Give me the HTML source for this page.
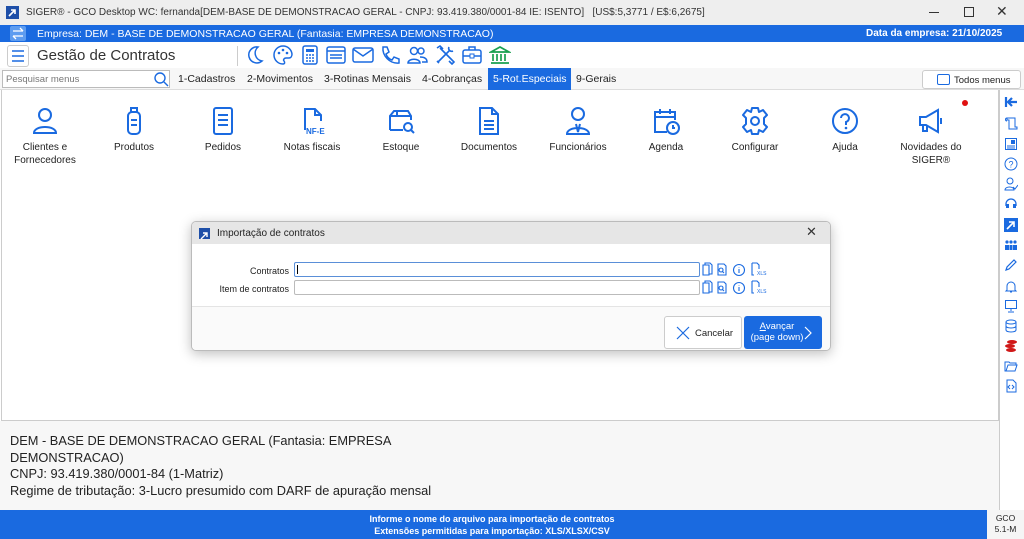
<!DOCTYPE html><html><head><meta charset="utf-8"><style>
*{box-sizing:border-box;margin:0;padding:0}
body{width:1024px;height:539px;overflow:hidden;font-family:"Liberation Sans","DejaVu Sans",sans-serif;background:#fff;position:relative;color:#222}
.a{position:absolute}
.ic{position:absolute;top:106px;width:90px;text-align:center;font-size:10px;color:#222;line-height:13px}
.ic svg{display:block;margin:0 auto 5px;width:30px;height:30px}
.mi{position:absolute;top:73px;font-size:10.5px}
.tb svg{position:absolute;top:44px}
.sb svg{position:absolute;left:1004px;width:14px;height:14px}
</style></head><body>
<div class="a" style="left:0;top:0;width:1024px;height:25px;background:#eeeeee"></div>
<div class="a" style="left:6px;top:6px;width:13px;height:13px;background:#1e4fa8"><svg width="13" height="13"><path d="M3 10L9 4M5 4h4v4" stroke="#fff" stroke-width="1.6" fill="none"/></svg></div>
<div class="a" style="left:26px;top:7px;font-size:10px;color:#333">SIGER® - GCO Desktop WC: fernanda[DEM-BASE DE DEMONSTRACAO GERAL - CNPJ: 93.419.380/0001-84 IE: ISENTO]&nbsp;&nbsp;&nbsp;[US$:5,3771 / E$:6,2675]</div>
<div class="a" style="left:929px;top:12px;width:10px;height:1px;background:#333"></div>
<div class="a" style="left:964px;top:7px;width:10px;height:10px;border:1px solid #333"></div>
<div class="a" style="left:996px;top:3px;font-size:14px;color:#333">✕</div>
<div class="a" style="left:0;top:25px;width:1024px;height:17px;background:#1a6ae0"></div>
<div class="a" style="left:10px;top:26px;width:16px;height:15px;background:#5d9cf0;border-radius:2px"><svg width="16" height="15"><path d="M3 5h10M10 2l3 3M13 10H3M6 13l-3-3" stroke="#fff" stroke-width="1.3" fill="none"/></svg></div>
<div class="a" style="left:37px;top:28px;font-size:10.5px;color:#fff">Empresa: DEM - BASE DE DEMONSTRACAO GERAL (Fantasia: EMPRESA DEMONSTRACAO)</div>
<div class="a" style="left:866px;top:28px;font-size:10px;color:#fff;font-weight:bold">Data da empresa: 21/10/2025</div>
<div class="a" style="left:7px;top:45px;width:22px;height:22px;border:1px solid #ccc;border-radius:3px"><svg width="20" height="20"><path d="M4 5h12M4 10h12M4 15h12" stroke="#1a6ae0" stroke-width="1.6"/></svg></div>
<div class="a" style="left:37px;top:47px;font-size:15px;color:#333">Gestão de Contratos</div>
<div class="a" style="left:237px;top:46px;width:1px;height:20px;background:#ccc"></div>
<div class="tb"><svg style="left:245px" width="20" height="22"><path d="M13 3a8 8 0 1 0 4 14a8 8 0 0 1-4-14z" stroke="#1a6ae0" stroke-width="1.5" fill="none"/></svg>
<svg style="left:272px" width="22" height="22"><path d="M11 2a9 9 0 1 0 0 18c2 0 2-2 1-3s0-3 2-3h3c2 0 3-2 3-4A9 9 0 0 0 11 2z" stroke="#1a6ae0" stroke-width="1.5" fill="none"/><circle cx="7" cy="9" r="1.3" fill="#1a6ae0"/><circle cx="11" cy="6" r="1.3" fill="#1a6ae0"/><circle cx="15" cy="9" r="1.3" fill="#1a6ae0"/></svg>
<svg style="left:300px" width="20" height="22"><rect x="3" y="2" width="14" height="18" rx="2" stroke="#1a6ae0" stroke-width="1.5" fill="none"/><rect x="6" y="5" width="8" height="3" fill="#1a6ae0"/><path d="M6 11h2M9 11h2M12 11h2M6 14h2M9 14h2M12 14h2M6 17h2M9 17h2M12 17h2" stroke="#1a6ae0" stroke-width="1.5"/></svg>
<svg style="left:325px" width="22" height="22"><rect x="2" y="3" width="18" height="16" rx="2" stroke="#1a6ae0" stroke-width="1.5" fill="none"/><path d="M2 7h18M5 11h12M5 14h12" stroke="#1a6ae0" stroke-width="1.5"/></svg>
<svg style="left:351px" width="24" height="22"><rect x="2" y="4" width="20" height="14" rx="2" stroke="#1a6ae0" stroke-width="1.5" fill="none"/><path d="M2 5l10 7l10-7" stroke="#1a6ae0" stroke-width="1.5" fill="none"/></svg>
<svg style="left:379px" width="22" height="22"><path d="M4 3l4 0l2 5l-3 2c1 3 3 5 6 6l2-3l5 2v4c-9 1-17-7-16-16z" stroke="#1a6ae0" stroke-width="1.5" fill="none"/></svg>
<svg style="left:406px" width="22" height="22"><circle cx="8" cy="7" r="3.5" stroke="#1a6ae0" stroke-width="1.5" fill="none"/><circle cx="15" cy="7" r="3" stroke="#1a6ae0" stroke-width="1.5" fill="none"/><path d="M2 19c0-5 12-5 12 0zM14 13c4 0 7 1 7 5h-5" stroke="#1a6ae0" stroke-width="1.5" fill="none"/></svg>
<svg style="left:434px" width="22" height="22"><path d="M4 18L16 6M6 4l12 12M3 4l3-2l3 3M17 15l3 3l-2 2l-3-3M15 3a3 3 0 0 0 4 4M3 17l2 2" stroke="#1a6ae0" stroke-width="1.6" fill="none"/></svg>
<svg style="left:461px" width="22" height="22"><rect x="2" y="6" width="18" height="13" rx="2" stroke="#1a6ae0" stroke-width="1.5" fill="none"/><path d="M8 6V3h6v3M2 12h18" stroke="#1a6ae0" stroke-width="1.5" fill="none"/><rect x="9" y="10" width="4" height="4" fill="#fff" stroke="#1a6ae0"/></svg>
<svg style="left:489px" width="22" height="22"><path d="M2 8l9-5l9 5zM4 10v7M8 10v7M12 10v7M16 10v7M2 19h18" stroke="#1aa050" stroke-width="1.7" fill="none"/></svg></div>
<div class="a" style="left:0;top:68px;width:1024px;height:22px;background:#f7f7f7;border-bottom:1px solid #ddd"></div>
<div class="a" style="left:2px;top:70px;width:168px;height:18px;background:#fff;border:1px solid #bbb;font-size:9.5px;color:#777;padding:3px 3px">Pesquisar menus</div>
<svg class="a" style="left:153px;top:71px" width="16" height="16"><circle cx="7" cy="7" r="5" stroke="#1a6ae0" stroke-width="1.4" fill="none"/><path d="M11 11l4 4" stroke="#1a6ae0" stroke-width="1.4"/></svg>
<div class="mi" style="left:178px">1-Cadastros</div>
<div class="mi" style="left:247px">2-Movimentos</div>
<div class="mi" style="left:324px">3-Rotinas Mensais</div>
<div class="mi" style="left:422px">4-Cobranças</div>
<div class="a" style="left:488px;top:68px;width:83px;height:22px;background:#1a6ae0"></div>
<div class="mi" style="left:493px;color:#fff">5-Rot.Especiais</div>
<div class="mi" style="left:576px">9-Gerais</div>
<div class="a" style="left:922px;top:70px;width:99px;height:19px;background:#fff;border:1px solid #ccc;border-radius:3px;font-size:9.5px;padding:4px 0 0 31px">Todos menus</div>
<div class="a" style="left:937px;top:74px;width:13px;height:11px;border:1px solid #1a6ae0;border-radius:2px"></div>
<div class="a" style="left:1px;top:90px;width:998px;height:331px;border:1px solid #ccc;border-top:none;background:#fff"></div>
<div class="ic" style="left:0"><svg viewBox="0 0 30 30"><circle cx="15" cy="9" r="6" stroke="#1a6ae0" stroke-width="2" fill="none"/><path d="M4 27c0-8 22-8 22 0z" stroke="#1a6ae0" stroke-width="2" fill="none"/></svg>Clientes e<br>Fornecedores</div>
<div class="ic" style="left:89px"><svg viewBox="0 0 30 30"><rect x="12" y="2" width="6" height="4" stroke="#1a6ae0" stroke-width="2" fill="none"/><rect x="9" y="6" width="12" height="22" rx="4" stroke="#1a6ae0" stroke-width="2" fill="none"/><path d="M12 14h6M12 19h6" stroke="#1a6ae0" stroke-width="2"/></svg>Produtos</div>
<div class="ic" style="left:178px"><svg viewBox="0 0 30 30"><rect x="6" y="2" width="18" height="26" rx="2" stroke="#1a6ae0" stroke-width="2" fill="none"/><path d="M10 9h10M10 14h10M10 19h10" stroke="#1a6ae0" stroke-width="2"/></svg>Pedidos</div>
<div class="ic" style="left:267px"><svg viewBox="0 0 30 30"><path d="M8 24V3h10l6 6v6M18 3v6h6" stroke="#1a6ae0" stroke-width="2" fill="none"/><text x="9" y="28" font-size="8" font-weight="bold" fill="#1a6ae0" font-family="Liberation Sans">NF-E</text></svg>Notas fiscais</div>
<div class="ic" style="left:356px"><svg viewBox="0 0 30 30"><path d="M4 24V10l4-5h14l3 5v4M4 10h20M4 24h13M11 5v5" stroke="#1a6ae0" stroke-width="2" fill="none"/><circle cx="22" cy="21" r="4" stroke="#1a6ae0" stroke-width="2" fill="none"/><path d="M25 24l3 3" stroke="#1a6ae0" stroke-width="2"/></svg>Estoque</div>
<div class="ic" style="left:444px"><svg viewBox="0 0 30 30"><path d="M6 2h12l6 6v20H6zM18 2v6h6M10 15h10M10 19h10M10 23h10" stroke="#1a6ae0" stroke-width="2" fill="none"/></svg>Documentos</div>
<div class="ic" style="left:533px"><svg viewBox="0 0 30 30"><circle cx="15" cy="8" r="6" stroke="#1a6ae0" stroke-width="2" fill="none"/><path d="M4 28c0-8 22-8 22 0z M13 18l2 8l2-8" stroke="#1a6ae0" stroke-width="2" fill="none"/></svg>Funcionários</div>
<div class="ic" style="left:621px"><svg viewBox="0 0 30 30"><path d="M16 26H4V6h20v8M4 11h20M9 3v5M19 3v5" stroke="#1a6ae0" stroke-width="2" fill="none"/><circle cx="22" cy="22" r="6" stroke="#1a6ae0" stroke-width="2" fill="none"/><path d="M22 19v3h2" stroke="#1a6ae0" stroke-width="2" fill="none"/></svg>Agenda</div>
<div class="ic" style="left:710px"><svg viewBox="0 0 30 30"><path d="M12 2h6l1 4l4-2l4 5l-3 3v6l3 3l-4 5l-4-2l-1 4h-6l-1-4l-4 2l-4-5l3-3v-6l-3-3l4-5l4 2z" stroke="#1a6ae0" stroke-width="2" fill="none" stroke-linejoin="round"/><circle cx="15" cy="15" r="4" stroke="#1a6ae0" stroke-width="2" fill="none"/></svg>Configurar</div>
<div class="ic" style="left:800px"><svg viewBox="0 0 30 30"><circle cx="15" cy="15" r="12" stroke="#1a6ae0" stroke-width="2" fill="none"/><path d="M11 12a4 4 0 1 1 5 4v3" stroke="#1a6ae0" stroke-width="2" fill="none"/><circle cx="16" cy="22" r="1.3" fill="#1a6ae0"/></svg>Ajuda</div>
<div class="ic" style="left:886px"><svg viewBox="0 0 30 30"><path d="M4 11h6l12-7v22l-12-7H4zM7 19v6h4v-6M25 12v6" stroke="#1a6ae0" stroke-width="2" fill="none"/></svg>Novidades do<br>SIGER®</div>
<div class="a" style="left:962px;top:100px;width:6px;height:6px;border-radius:50%;background:#e01010"></div>
<div class="a" style="left:999px;top:90px;width:1px;height:420px;background:#ccc"></div>
<div class="sb">
<svg style="top:95px" viewBox="0 0 14 14"><path d="M2 2v10M13 7H5M8 3L4 7l4 4" stroke="#1a6ae0" stroke-width="2.2" fill="none"/></svg>
<svg style="top:116px" viewBox="0 0 14 14"><path d="M3 2h8v9h2v2H5v-9H3zM3 2a1 1 0 0 0 0 3" stroke="#1a6ae0" stroke-width="1" fill="none"/></svg>
<svg style="top:137px" viewBox="0 0 14 14"><rect x="1.5" y="1.5" width="11" height="11" stroke="#1a6ae0" fill="none"/><rect x="7" y="3" width="4" height="4" fill="#1a6ae0"/><path d="M3 9h8M3 11h8" stroke="#1a6ae0"/></svg>
<svg style="top:157px" viewBox="0 0 14 14"><circle cx="7" cy="7" r="6" stroke="#1a6ae0" fill="none"/><text x="4.5" y="10.5" font-size="9" fill="#1a6ae0">?</text></svg>
<svg style="top:177px" viewBox="0 0 14 14"><circle cx="6" cy="4" r="3" stroke="#1a6ae0" fill="none"/><path d="M1 13c0-4 9-4 9 0zM9 10l2 2l3-4" stroke="#1a6ae0" fill="none"/></svg>
<svg style="top:197px" viewBox="0 0 14 14"><path d="M2 9V7a5 5 0 0 1 10 0v2" stroke="#1a6ae0" stroke-width="1.3" fill="none"/><rect x="2" y="7" width="3" height="4" fill="#1a6ae0"/><rect x="9" y="7" width="3" height="4" fill="#1a6ae0"/></svg>
<svg style="top:218px" viewBox="0 0 14 14"><rect width="14" height="14" fill="#1a6ae0"/><path d="M3 11l7-7M5 4h5v5" stroke="#fff" stroke-width="1.6" fill="none"/></svg>
<svg style="top:238px" viewBox="0 0 14 14"><circle cx="3" cy="4" r="1.6" fill="#1a6ae0"/><circle cx="7" cy="4" r="1.6" fill="#1a6ae0"/><circle cx="11" cy="4" r="1.6" fill="#1a6ae0"/><rect x="1" y="7" width="4" height="5" fill="#1a6ae0"/><rect x="5.5" y="7" width="3" height="5" fill="#1a6ae0"/><rect x="9" y="7" width="4" height="5" fill="#1a6ae0"/></svg>
<svg style="top:258px" viewBox="0 0 14 14"><path d="M2 12l1-3l7-7l2 2l-7 7z" stroke="#1a6ae0" stroke-width="1.2" fill="none"/></svg>
<svg style="top:280px" viewBox="0 0 14 14"><path d="M3 10V6a4 4 0 0 1 8 0v4l1 1H2zM6 12h2" stroke="#1a6ae0" fill="none"/></svg>
<svg style="top:299px" viewBox="0 0 14 14"><rect x="1.5" y="1.5" width="11" height="8" stroke="#1a6ae0" fill="none"/><path d="M7 10v2M4 13h6" stroke="#1a6ae0"/></svg>
<svg style="top:319px" viewBox="0 0 14 14"><ellipse cx="7" cy="3" rx="5" ry="2" stroke="#1a6ae0" fill="none"/><path d="M2 3v8c0 2.6 10 2.6 10 0V3M2 7c0 2.6 10 2.6 10 0" stroke="#1a6ae0" fill="none"/></svg>
<svg style="top:339px" viewBox="0 0 14 14"><ellipse cx="8" cy="3" rx="5" ry="2" fill="#d01818"/><ellipse cx="6" cy="7" rx="5" ry="2" fill="#d01818"/><ellipse cx="7" cy="11" rx="5" ry="2" fill="#d01818"/></svg>
<svg style="top:359px" viewBox="0 0 14 14"><path d="M1 3h4l1 1h6v2H4l-2 6H1zM4 6h9l-2 6H2" stroke="#1a6ae0" fill="none"/></svg>
<svg style="top:379px" viewBox="0 0 14 14"><path d="M3 1h6l3 3v9H3zM6 6l-2 2l2 2M8 6l2 2l-2 2" stroke="#1a6ae0" fill="none"/></svg>
</div>
<div class="a" style="left:0;top:421px;width:999px;height:89px;background:#f7f7f7"></div>
<div class="a" style="left:10px;top:433px;font-size:12.8px;line-height:16.5px;color:#222;white-space:nowrap">DEM - BASE DE DEMONSTRACAO GERAL (Fantasia: EMPRESA<br>DEMONSTRACAO)<br>CNPJ: 93.419.380/0001-84 (1-Matriz)<br>Regime de tributação: 3-Lucro presumido com DARF de apuração mensal</div>
<div class="a" style="left:0;top:510px;width:1024px;height:29px;background:#1a6ae0"></div>
<div class="a" style="left:0;top:513px;width:984px;text-align:center;font-size:9px;line-height:12px;color:#fff;font-weight:bold">Informe o nome do arquivo para importação de contratos<br>Extensões permitidas para importação: XLS/XLSX/CSV</div>
<div class="a" style="left:987px;top:510px;width:37px;height:29px;background:#f5f5f5;font-size:8.5px;line-height:11px;text-align:center;padding-top:3px">GCO<br>5.1-M</div>
<div class="a" style="left:191px;top:221px;width:640px;height:130px;background:#fff;border:1px solid #bbb;border-radius:5px;box-shadow:0 3px 12px rgba(0,0,0,.25);overflow:hidden">
<div style="height:22px;background:#e6e6e6"></div>
<div style="position:absolute;left:7px;top:6px;width:11px;height:11px;background:#1e4fa8"><svg width="11" height="11"><path d="M2 9l6-6M4 3h4v4" stroke="#fff" stroke-width="1.4" fill="none"/></svg></div>
<div style="position:absolute;left:25px;top:6px;font-size:10px">Importação de contratos</div>
<div style="position:absolute;left:614px;top:2px;font-size:13px;color:#333">✕</div>
<div style="position:absolute;left:0;right:0;top:84px;height:1px;background:#e4e4e4"></div>
<div style="position:absolute;left:0;right:0;top:85px;bottom:0;background:#fafafa"></div>
<div style="position:absolute;right:541px;top:44px;font-size:9px">Contratos</div>
<div style="position:absolute;right:541px;top:62px;font-size:9px">Item de contratos</div>
<div style="position:absolute;left:102px;top:40px;width:406px;height:15px;border:1px solid #5a8fd8;border-radius:2px"><div style="margin:2px 0 0 2px;width:1px;height:9px;background:#000"></div></div>
<div style="position:absolute;left:102px;top:58px;width:406px;height:15px;border:1px solid #bbb;border-radius:2px"></div>
<svg style="position:absolute;left:510px;top:40px" width="66" height="36"><g id="g" stroke="#1a6ae0" fill="none" stroke-width="1.1"><path d="M1 3h6v10H1zM3 3V1h5l2 2v9H7"/><path d="M16 2h6l2 2v9h-8zM19 6a2 2 0 1 0 0.1 0M20 9l2 2"/><circle cx="37" cy="8" r="5.5"/><path d="M37 7v4M37 5v0.5"/><path d="M50 1h5l2 2v4M50 1v12h2"/></g><text x="55" y="13" font-size="5" fill="#1a6ae0">XLS</text><use href="#g" y="18"/><text x="55" y="31" font-size="5" fill="#1a6ae0">XLS</text></svg>
<div style="position:absolute;left:472px;top:94px;width:78px;height:33px;background:#fff;border:1px solid #ccc;border-radius:3px;font-size:9.5px;padding:11px 0 0 30px">Cancelar</div>
<svg style="position:absolute;left:484px;top:104px" width="14" height="14"><path d="M1 1l12 12M13 1L1 13" stroke="#1a6ae0" stroke-width="1.2"/></svg>
<div style="position:absolute;left:552px;top:94px;width:78px;height:33px;background:#1a6ae0;border-radius:3px;font-size:9.5px;color:#fff;line-height:11px;padding:5px 0 0 5px;text-align:center"><div style="width:56px"><u>A</u>vançar<br>(page down)</div></div>
<svg style="position:absolute;left:612px;top:104px" width="8" height="14"><path d="M1 1l6 6l-6 6" stroke="#fff" stroke-width="1.2" fill="none"/></svg>
</div>
</body></html>
